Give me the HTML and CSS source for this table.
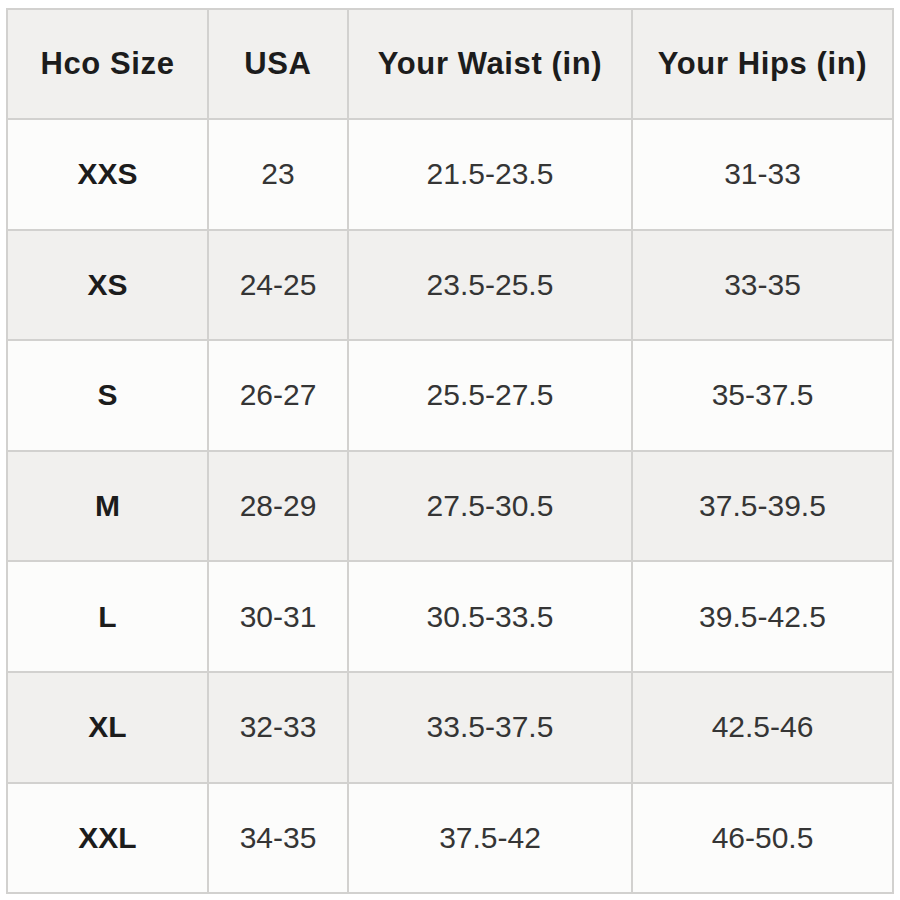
FILE: index.html
```html
<!DOCTYPE html>
<html>
<head>
<meta charset="utf-8">
<link rel="stylesheet" href="styles.css">
</head>
<body>
<table class="chart">
  <colgroup>
    <col class="c1"><col class="c2"><col class="c3"><col class="c4">
  </colgroup>
  <thead>
    <tr class="alt head"><th>Hco Size</th><th>USA</th><th>Your Waist (in)</th><th>Your Hips (in)</th></tr>
  </thead>
  <tbody>
    <tr><th>XXS</th><td>23</td><td>21.5-23.5</td><td>31-33</td></tr>
    <tr class="alt"><th>XS</th><td>24-25</td><td>23.5-25.5</td><td>33-35</td></tr>
    <tr><th>S</th><td>26-27</td><td>25.5-27.5</td><td>35-37.5</td></tr>
    <tr class="alt"><th>M</th><td>28-29</td><td>27.5-30.5</td><td>37.5-39.5</td></tr>
    <tr><th>L</th><td>30-31</td><td>30.5-33.5</td><td>39.5-42.5</td></tr>
    <tr class="alt"><th>XL</th><td>32-33</td><td>33.5-37.5</td><td>42.5-46</td></tr>
    <tr><th>XXL</th><td>34-35</td><td>37.5-42</td><td>46-50.5</td></tr>
  </tbody>
</table>
</body>
</html>
```
FILE: styles.css
```css
html, body {
  margin: 0;
  padding: 0;
  background: #ffffff;
}
body {
  padding: 8px 6px 0 6px;
  font-family: "Liberation Sans", Arial, sans-serif;
}
.chart {
  border-collapse: collapse;
  table-layout: fixed;
  width: 886px;
}
.c1 { width: 201px; }
.c2 { width: 140px; }
.c3 { width: 284px; }
.c4 { width: 261px; }
.chart th, .chart td {
  border: 2px solid #d2d1cf;
  height: 108.6px;
  padding: 0;
  text-align: center;
  vertical-align: middle;
  font-size: 30px;
  background: #fcfcfb;
}
.chart td {
  font-weight: normal;
  color: #353535;
}
.chart th {
  font-weight: bold;
  color: #1c1c1c;
}
.chart tr.head th {
  height: 108px;
  font-size: 31px;
  letter-spacing: 0.6px;
  padding-top: 0;
}
.chart tr.alt th, .chart tr.alt td {
  background: #f1f0ee;
}
```
